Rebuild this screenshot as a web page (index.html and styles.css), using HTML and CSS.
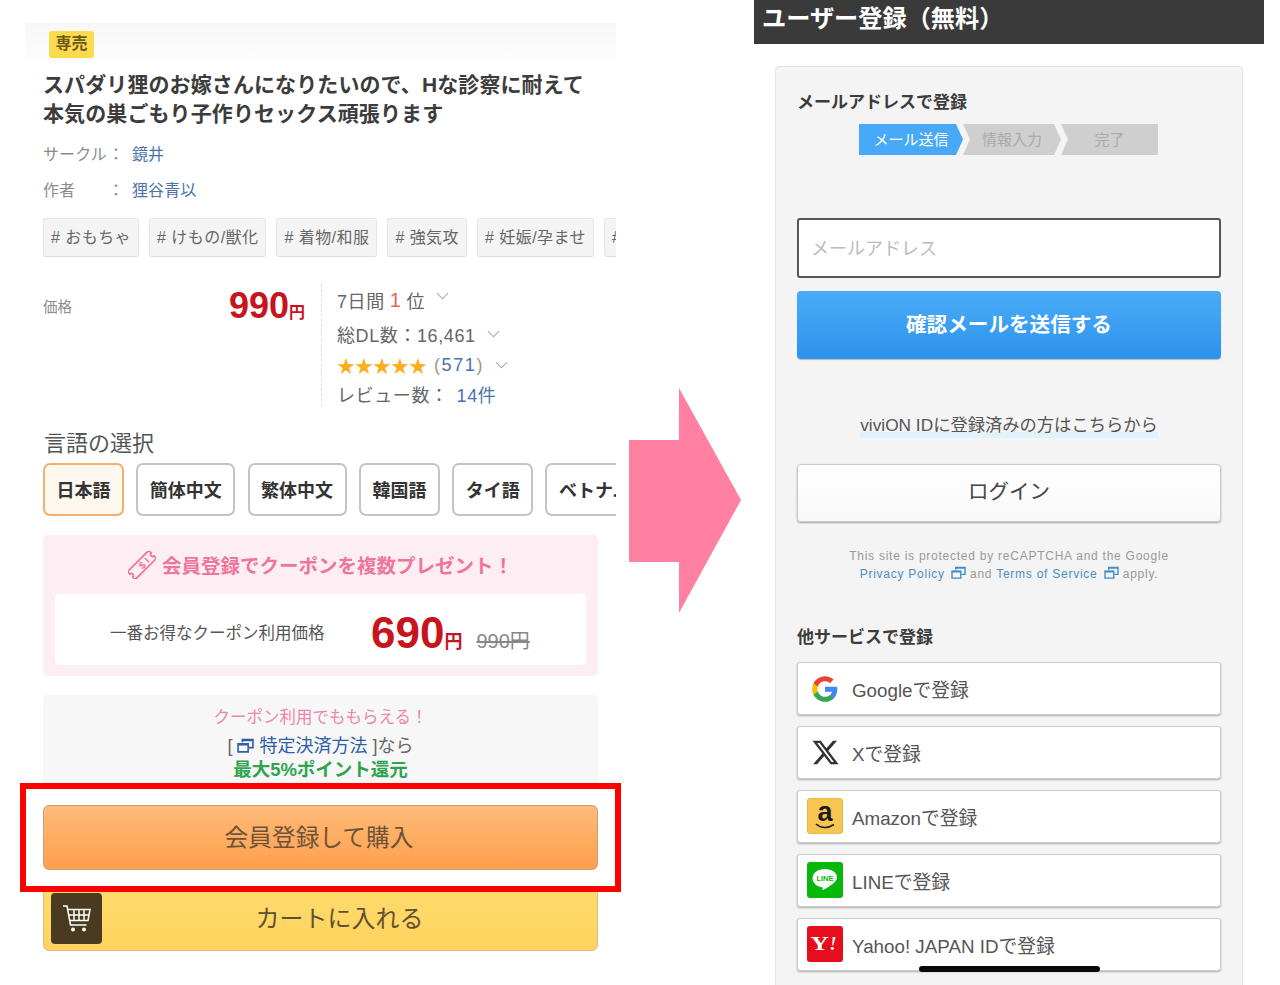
FILE: index.html
```html
<!DOCTYPE html>
<html lang="ja">
<head>
    <meta charset="UTF-8">
    <meta name="viewport" content="width=device-width, initial-scale=1.0">
    <title>会員登録の流れ</title>
    <link rel="stylesheet" href="styles.css">
</head>
<body>
    <svg class="icon-defs" width="0" height="0">
        <symbol id="ext" viewBox="0 0 16 14">
            <path d="M5 4V1.500h10v7.500h-4" fill="none" stroke="currentColor" stroke-width="1.500"/>
            <path d="M1 5.500h9.500v7.500H1z" fill="none" stroke="currentColor" stroke-width="1.500"/>
            <path d="M5 1h10v2H5zM1 5h9.500v2H1z" fill="currentColor"/>
        </symbol>
        <symbol id="chev" viewBox="0 0 14 8">
            <path d="M1 1l6 6 6-6" fill="none" stroke="currentColor" stroke-width="1.2"/>
        </symbol>
    </svg>
    <div class="canvas">
        <section class="product">
            <div class="product-head">
                <span class="badge">専売</span>
            </div>
            <h1 class="title">スパダリ狸のお嫁さんになりたいので、Hな診察に耐えて<br>本気の巣ごもり子作りセックス頑張ります</h1>
            <div class="meta"><span class="meta-key">サークル</span><span class="meta-sep">：</span><a class="link">鏡井</a></div>
            <div class="meta"><span class="meta-key">作者</span><span class="meta-sep">：</span><a class="link">狸谷青以</a></div>
            <div class="tags">
                <span class="tag"># おもちゃ</span>
                <span class="tag"># けもの/獣化</span>
                <span class="tag"># 着物/和服</span>
                <span class="tag"># 強気攻</span>
                <span class="tag"># 妊娠/孕ませ</span>
                <span class="tag"># 中出し</span>
            </div>
            <div class="price-row">
                <div class="price-label">価格</div>
                <div class="price">990<small>円</small></div>
                <div class="stats">
                    <div class="stat stat-rank">7日間<b>1</b>位<svg class="chev chev-up"><use href="#chev"/></svg></div>
                    <div class="stat stat-dl">総DL数：16,461<svg class="chev"><use href="#chev"/></svg></div>
                    <div class="stat stat-rate"><span class="stars">★★★★★</span><span class="paren">(<a class="link">571</a>)</span><svg class="chev"><use href="#chev"/></svg></div>
                    <div class="stat stat-review">レビュー数： <a class="link">14件</a></div>
                </div>
            </div>
            <h2 class="lang-title">言語の選択</h2>
            <div class="langs">
                <span class="lang lang-active">日本語</span>
                <span class="lang">簡体中文</span>
                <span class="lang">繁体中文</span>
                <span class="lang">韓国語</span>
                <span class="lang">タイ語</span>
                <span class="lang">ベトナム語</span>
            </div>
            <div class="coupon">
                <div class="coupon-title">
                    <svg class="ticket" viewBox="0 0 28 28">
                        <g transform="rotate(-45 14 14)">
                            <path d="M-1 8.500h30v3.500a2 2 0 0 0 0 4v3.500h-30v-3.500a2 2 0 0 0 0-4z" fill="none" stroke="#f0759c" stroke-width="1.800" stroke-linejoin="round"/>
                            <text class="ticket-mark" x="14" y="18">$</text>
                            <path d="M21 11v6" stroke="#f0759c" stroke-width="1.400"/>
                        </g>
                    </svg>
                    会員登録でクーポンを複数プレゼント！
                </div>
                <div class="coupon-body">
                    <span class="coupon-label">一番お得なクーポン利用価格</span>
                    <span class="coupon-price">690<small>円</small></span>
                    <s class="coupon-old">990円</s>
                </div>
            </div>
            <div class="points">
                <div class="points-lead">クーポン利用でももらえる！</div>
                <div class="points-pay">[ <svg class="ext"><use href="#ext"/></svg> <a class="pay-link">特定決済方法</a> ]なら</div>
                <div class="points-rate">最大5%ポイント還元</div>
            </div>
            <div class="buy-btn">会員登録して購入</div>
            <div class="cart-btn">
                <span class="cart-icon">
                    <svg width="28" height="27" viewBox="0 0 28 27">
                        <g fill="none" stroke="#fff" stroke-width="1.500">
                            <path d="M0 1h4l3.500 19h16"/>
                            <path d="M5 4.500h22l-2 11H7M11 4.500v11M16 4.500v11M21 4.500v11M6 10h20"/>
                        </g>
                        <circle cx="10" cy="24.500" r="2" fill="#fff"/>
                        <circle cx="21" cy="24.500" r="2" fill="#fff"/>
                    </svg>
                </span>
                <span class="cart-text">カートに入れる</span>
            </div>
        </section>

        <svg class="arrow" viewBox="0 0 112 226"><polygon points="0,52 50,52 50,0 112,112 50,225 50,174 0,174"/></svg>

        <section class="signup">
            <header class="signup-bar">ユーザー登録（無料）</header>
            <div class="card">
                <h3 class="card-title">メールアドレスで登録</h3>
                <div class="steps">
                    <span class="step step-now">メール送信</span>
                    <span class="step step-mid">情報入力</span>
                    <span class="step step-end">完了</span>
                </div>
                <div class="email">メールアドレス</div>
                <div class="send-btn">確認メールを送信する</div>
                <p class="vivion"><span class="vivion-mark">viviON IDに登録済みの方はこちらから</span></p>
                <div class="login-btn">ログイン</div>
                <p class="recaptcha">This site is protected by reCAPTCHA and the Google<br>
                    <a class="rc-link">Privacy Policy <svg class="ext rc-ext"><use href="#ext"/></svg></a> and <a class="rc-link">Terms of Service <svg class="ext rc-ext"><use href="#ext"/></svg></a> apply.</p>
                <h3 class="card-title other-title">他サービスで登録</h3>
                <div class="services">
                    <div class="service">
                        <span class="svc-icon">
                            <svg width="28" height="28" viewBox="0 0 24 24">
                                <path fill="#4285F4" d="M22.560 12.250c0-.780-.070-1.530-.200-2.250H12v4.260h5.920c-.260 1.370-1.040 2.530-2.210 3.310v2.770h3.570c2.080-1.920 3.280-4.740 3.280-8.090z"/>
                                <path fill="#34A853" d="M12 23c2.970 0 5.460-.980 7.280-2.660l-3.570-2.770c-.980.660-2.230 1.060-3.710 1.060-2.860 0-5.290-1.930-6.160-4.530H2.180v2.840C3.990 20.530 7.700 23 12 23z"/>
                                <path fill="#FBBC05" d="M5.840 14.090c-.220-.660-.350-1.360-.350-2.090s.130-1.430.350-2.090V7.070H2.180C1.430 8.550 1 10.220 1 12s.430 3.450 1.180 4.930l3.660-2.840z"/>
                                <path fill="#EA4335" d="M12 5.380c1.620 0 3.060.560 4.210 1.640l3.150-3.150C17.450 2.090 14.970 1 12 1 7.700 1 3.990 3.470 2.180 7.070l3.660 2.840c.870-2.600 3.300-4.530 6.160-4.530z"/>
                            </svg>
                        </span>
                        Googleで登録
                    </div>
                    <div class="service">
                        <span class="svc-icon">
                            <svg width="29" height="29" viewBox="0 0 24 24"><path fill="#333" d="M18.244 2.250h3.308l-7.227 8.260 8.502 11.240H16.170l-5.214-6.817L4.990 21.750H1.680l7.730-8.835L1.254 2.250H8.080l4.713 6.231zm-1.161 17.520h1.833L7.084 4.126H5.117z"/></svg>
                        </span>
                        Xで登録
                    </div>
                    <div class="service">
                        <span class="svc-icon svc-amazon">
                            <span class="amazon-a">a</span>
                            <svg class="amazon-smile" width="22" height="7" viewBox="0 0 22 7"><path d="M2 1c5 4.500 12 4.500 18 .5" fill="none" stroke="#222" stroke-width="1.600"/></svg>
                        </span>
                        Amazonで登録
                    </div>
                    <div class="service">
                        <span class="svc-icon svc-line">
                            <svg width="30" height="30" viewBox="0 0 30 30"><path fill="#fff" d="M15 4C7.800 4 2.500 8 2.500 13.200c0 4.500 4 8.200 9.500 9 .8.200.7.700.6 1.500-.1.700-.2 1.700.9 1.100 3-1.600 12.200-6.600 13.500-11.600C27.500 8 22.200 4 15 4z"/></svg>
                            <span class="line-word">LINE</span>
                        </span>
                        LINEで登録
                    </div>
                    <div class="service">
                        <span class="svc-icon svc-yahoo"><span class="yahoo-y">Y</span><i>!</i></span>
                        Yahoo! JAPAN IDで登録
                    </div>
                </div>
            </div>
        </section>

        <div class="highlight"></div>
        <div class="home-bar"></div>
    </div>
</body>
</html>
```

FILE: styles.css
```css
* {
    box-sizing: border-box;
}
html, body {
    margin: 0;
    padding: 0;
    background: #fff;
}
body {
    font-family: "Liberation Sans", "Noto Sans CJK JP", sans-serif;
    color: #444;
}
.icon-defs {
    position: absolute;
}
.canvas {
    position: relative;
    display: flex;
    align-items: flex-start;
    width: 1280px;
    height: 985px;
    overflow: hidden;
}

/* left phone */
.product {
    width: 591px;
    margin: 23px 0 0 25px;
    padding: 0 18px;
    overflow: hidden;
    flex-shrink: 0;
}
.product-head {
    margin: 0 -18px;
    padding: 8px 0 0 24px;
    height: 47px;
    background: linear-gradient(#f7f7f7, #fff);
}
.badge {
    display: inline-block;
    width: 45px;
    height: 27px;
    line-height: 26px;
    text-align: center;
    font-size: 16px;
    font-weight: bold;
    color: #6b5518;
    background: #fbdb4c;
    border-radius: 3px;
}
.title {
    margin: 0;
    font-size: 21px;
    line-height: 29px;
    font-weight: bold;
    letter-spacing: 0.1px;
    color: #3c3c3c;
    white-space: nowrap;
}
.meta {
    display: flex;
    height: 22px;
    line-height: 22px;
    margin-top: 14px;
    font-size: 16px;
    letter-spacing: 0.1px;
    color: #8c8c8c;
}
.title + .meta {
    margin-top: 16px;
}
.meta-key {
    width: 65px;
}
.meta-sep {
    width: 24px;
}
.link {
    color: #4a72ad;
}
.tags {
    display: flex;
    gap: 10px;
    margin-top: 16px;
    width: 640px;
}
.tag {
    height: 39px;
    line-height: 37px;
    padding: 0 7px;
    font-size: 16px;
    letter-spacing: 0.45px;
    color: #666;
    white-space: nowrap;
    background: #f4f4f4;
    border: 1px solid #e6e6e6;
    border-bottom-color: #ddd;
    border-radius: 3px;
}
.price-row {
    display: flex;
    margin-top: 27px;
    height: 122px;
}
.price-label {
    width: 120px;
    margin-top: 11px;
    font-size: 14.500px;
    color: #8c8c8c;
}
.price {
    width: 142px;
    text-align: right;
    font-size: 36px;
    line-height: 44px;
    font-weight: bold;
    color: #c8141c;
}
.price small {
    font-size: 16px;
}
.stats {
    margin-left: 16px;
    padding: 1px 0 0 15px;
    border-left: 1px dashed #ddd;
    font-size: 18px;
    letter-spacing: 0.6px;
    color: #666;
    white-space: nowrap;
}
.stat {
    display: flex;
    align-items: center;
    height: 30px;
}
.stat-rank b {
    font-weight: normal;
    color: #e8605c;
    margin: 0 5px;
    font-size: 20px;
}
.stat-dl {
    margin-top: 4px;
}
.stat-rate {
    margin-top: 1px;
}
.stat-review {
    margin-top: -1px;
}
.stars {
    color: #fbae1a;
    font-size: 18px;
    letter-spacing: 0;
    margin-right: 7px;
}
.paren {
    color: #9a9a9a;
    letter-spacing: 1.6px;
}
.stat-review .link {
    margin-left: 8px;
}
.chev {
    width: 13px;
    height: 8px;
    margin-left: 11px;
    color: #aaa;
}
.chev-up {
    margin-top: -8px;
}
.lang-title {
    margin: 22px 0 0 1px;
    font-size: 22px;
    line-height: 32px;
    font-weight: normal;
    color: #555;
}
.langs {
    display: flex;
    gap: 12.300px;
    margin-top: 3px;
    width: 620px;
}
.lang {
    height: 53px;
    line-height: 52px;
    padding: 0 11.500px;
    font-size: 18px;
    font-weight: bold;
    color: #333;
    white-space: nowrap;
    border: 2px solid #c4c4c4;
    border-radius: 7px;
}
.lang-active {
    border-color: #f0b070;
    background: #fff8ef;
}
.coupon {
    width: 555px;
    height: 141px;
    margin-top: 19px;
    padding: 0 12px;
    background: #fdeef3;
    border-radius: 5px;
}
.coupon-title {
    display: flex;
    align-items: center;
    justify-content: center;
    gap: 6px;
    height: 59px;
    font-size: 19.500px;
    font-weight: bold;
    color: #f0759c;
}
.ticket {
    width: 28px;
    height: 28px;
}
.ticket-mark {
    font-size: 10px;
    font-weight: bold;
    fill: #f0759c;
    text-anchor: middle;
}
.coupon-body {
    display: flex;
    align-items: center;
    height: 71px;
    padding-left: 55px;
    background: #fff;
    border-radius: 4px;
}
.coupon-label {
    width: 261px;
    margin-top: 4px;
    font-size: 16.500px;
    color: #555;
}
.coupon-price {
    margin-top: 16px;
    font-size: 44px;
    line-height: 50px;
    color: #c8141c;
    font-weight: bold;
}
.coupon-price small {
    font-size: 18px;
}
.coupon-old {
    margin: 20px 0 0 14px;
    font-size: 20px;
    color: #888;
}
.points {
    width: 555px;
    height: 88px;
    margin-top: 19px;
    padding-top: 11px;
    text-align: center;
    background: #f7f7f7;
    border-radius: 4px 4px 0 0;
}
.points-lead {
    height: 22px;
    line-height: 22px;
    font-size: 16.500px;
    color: #ef85ac;
}
.points-pay {
    height: 24px;
    line-height: 24px;
    margin-top: 6px;
    font-size: 18px;
    color: #666;
}
.pay-link {
    color: #2f5ea8;
}
.ext {
    width: 17px;
    height: 15px;
    color: #2f5ea8;
    vertical-align: -1px;
}
.points-rate {
    height: 22px;
    line-height: 22px;
    margin-top: 1px;
    font-size: 18.500px;
    font-weight: bold;
    color: #2ea44f;
}
.buy-btn {
    width: 555px;
    height: 65px;
    line-height: 65px;
    margin-top: 22px;
    padding-right: 3px;
    text-align: center;
    font-size: 23.700px;
    color: #6e5238;
    background: linear-gradient(#ffbb7a, #ff9f4c);
    border: 1px solid #cf9d73;
    border-radius: 6px;
}
.cart-btn {
    display: flex;
    align-items: center;
    width: 555px;
    height: 65px;
    margin-top: 16px;
    padding-left: 7px;
    color: #5f5030;
    font-size: 24px;
    background: linear-gradient(#ffdb6c, #ffd35e);
    border: 1px solid #d8bd7e;
    border-radius: 6px;
}
.cart-icon {
    display: flex;
    align-items: center;
    justify-content: center;
    width: 51px;
    height: 51px;
    background: #4a3b20;
    border-radius: 4px;
}
.cart-text {
    flex: 1;
    text-align: center;
    padding: 0 20px 5px 0;
}

/* arrow */
.arrow {
    width: 112px;
    height: 226px;
    margin: 388px 0 0 13px;
    flex-shrink: 0;
}
.arrow polygon {
    fill: #ff80a1;
}

/* right phone */
.signup {
    width: 510px;
    margin-left: 13px;
    flex-shrink: 0;
}
.signup-bar {
    height: 44px;
    line-height: 38px;
    padding-left: 8px;
    font-size: 24.200px;
    font-weight: bold;
    color: #fff;
    background: #3a3a3a;
}
.card {
    width: 468px;
    height: 930px;
    margin: 22px 0 0 21px;
    padding: 0 21px;
    background: #f4f4f4;
    border: 1px solid #e4e4e4;
    border-radius: 4px;
}
.card-title {
    margin: 25px 0 0;
    font-size: 17px;
    line-height: 22px;
    font-weight: bold;
    color: #3c3c3c;
}
.steps {
    display: flex;
    height: 31px;
    margin: 10px 0 0 62px;
    font-size: 15px;
    line-height: 31px;
    text-align: center;
}
.step {
    background: #cfcfcf;
    color: #aaa;
}
.step-now {
    width: 104px;
    color: #fff;
    background: #47a9f7;
    clip-path: polygon(0 0, 97px 0, 100% 50%, 97px 100%, 0 100%);
}
.step-mid {
    width: 98px;
    clip-path: polygon(0 0, 91px 0, 100% 50%, 91px 100%, 0 100%, 7px 50%);
}
.step-end {
    width: 97px;
    clip-path: polygon(0 0, 100% 0, 100% 100%, 0 100%, 7px 50%);
}
.email {
    height: 60px;
    line-height: 58px;
    margin-top: 63px;
    padding-left: 12px;
    font-size: 18px;
    color: #bbb;
    background: #fff;
    border: 2px solid #555;
    border-radius: 3px;
}
.send-btn {
    height: 68px;
    line-height: 67px;
    margin-top: 13px;
    text-align: center;
    font-size: 20.600px;
    font-weight: bold;
    color: #fff;
    background: linear-gradient(#4aacf8, #2d92ec);
    border-radius: 4px;
    box-shadow: 0 1px 1px rgba(0, 0, 0, 0.25);
}
.vivion {
    margin: 53px 0 0;
    text-align: center;
    font-size: 17.300px;
    line-height: 26px;
    color: #555;
}
.vivion-mark {
    display: inline-block;
    background: linear-gradient(transparent 20px, #e3f1fc 20px);
}
.login-btn {
    height: 58px;
    line-height: 54px;
    margin-top: 26px;
    text-align: center;
    font-size: 20.500px;
    color: #444;
    background: linear-gradient(#fff, #f8f8f8);
    border: 1px solid #ccc;
    border-radius: 4px;
    box-shadow: 0 1px 2px rgba(0, 0, 0, 0.35);
}
.recaptcha {
    margin: 25px 0 0;
    text-align: center;
    font-size: 12px;
    line-height: 18px;
    letter-spacing: 0.75px;
    color: #999;
}
.rc-link {
    color: #4a90c4;
}
.rc-ext {
    width: 15px;
    height: 13px;
    color: #3f8dc6;
    margin: 0 0 0 2px;
    vertical-align: -1px;
}
.other-title {
    margin-top: 44px;
}
.services {
    display: flex;
    flex-direction: column;
    gap: 10.900px;
    margin-top: 13px;
}
.service {
    display: flex;
    align-items: center;
    height: 53px;
    padding-left: 9px;
    font-size: 18.800px;
    color: #555;
    background: #fff;
    border: 1px solid #ccc;
    border-radius: 3px;
    box-shadow: 0 1px 2px rgba(0, 0, 0, 0.3);
}
.svc-icon {
    position: relative;
    display: flex;
    align-items: center;
    justify-content: center;
    width: 36px;
    height: 36px;
    margin-right: 9px;
    border-radius: 3px;
}
.svc-amazon {
    background: #f8c650;
    border: 1px solid #e8b848;
}
.amazon-a {
    margin-top: -8px;
    font-size: 27px;
    line-height: 28px;
    font-weight: bold;
    color: #1c1c1c;
}
.amazon-smile {
    position: absolute;
    left: 6px;
    bottom: 3px;
}
.svc-line {
    background: #06b80c;
}
.line-word {
    position: absolute;
    top: 12px;
    left: 0;
    width: 36px;
    text-align: center;
    font-size: 7.500px;
    line-height: 9px;
    font-weight: bold;
    color: #06b80c;
}
.svc-yahoo {
    font-family: "Liberation Serif", serif;
    font-size: 18px;
    font-weight: bold;
    color: #fff;
    background: #e60e1c;
}
.yahoo-y {
    display: inline-block;
    margin-right: 3px;
    transform: scaleX(1.4);
}
.svc-yahoo i {
    font-size: 18px;
}

/* overlays on top of the screenshots */
.highlight {
    position: absolute;
    left: 20px;
    top: 783px;
    width: 601px;
    height: 109px;
    border: 6px solid #f00;
}
.home-bar {
    position: absolute;
    left: 919px;
    top: 966px;
    width: 181px;
    height: 6px;
    background: #0a0a0a;
    border-radius: 3px;
}
```
